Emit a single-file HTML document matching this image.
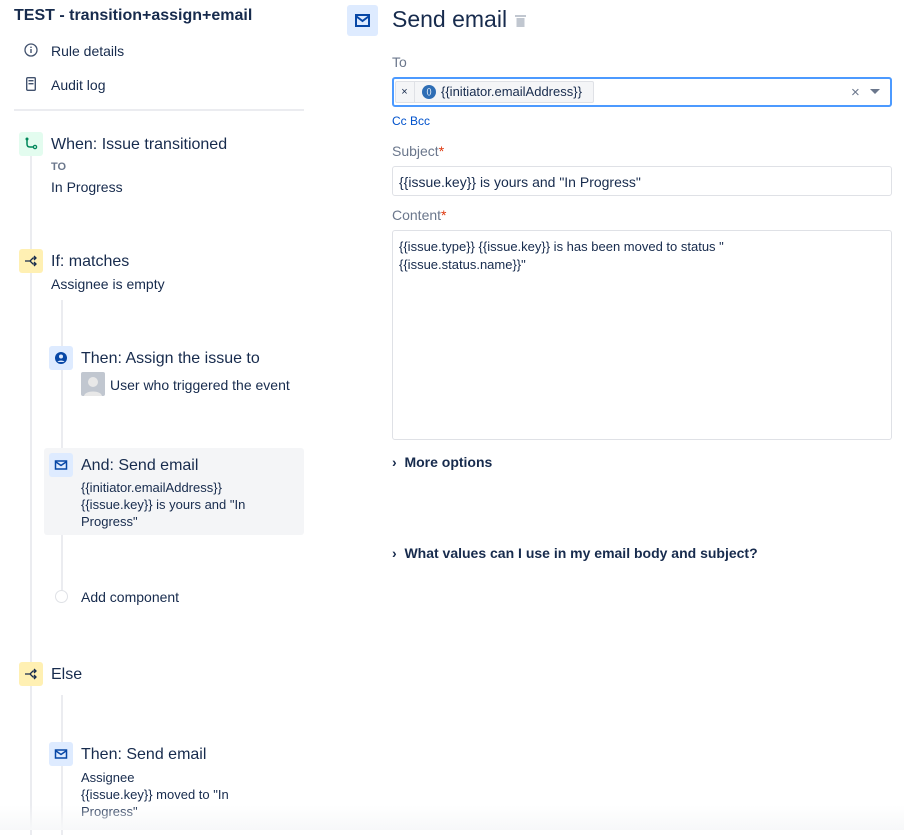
<!DOCTYPE html>
<html><head><style>
body{margin:0;width:904px;height:830px;background:#fff;font-family:"Liberation Sans",sans-serif;color:#172b4d;position:relative;overflow:hidden}
.a{position:absolute;white-space:nowrap}
.ic{position:absolute;width:24px;height:24px;border-radius:3px}
.h{font-size:16px}
.s{font-size:14px;color:#172b4d}
.m{font-size:13px;line-height:17px}
.lbl{font-size:14px;color:#6b778c}
.box{position:absolute;border:1px solid #dfe1e6;border-radius:3px;background:#fff;font-size:14px;box-sizing:border-box}
</style></head><body>
<div class="a" style="left:14px;top:7px;font-size:16px;font-weight:bold">TEST - transition+assign+email</div>
<svg class="a" style="left:24px;top:43px" width="14" height="14"><circle cx="7" cy="7" r="6" fill="none" stroke="#42526e" stroke-width="1.3"/><rect x="6.3" y="6" width="1.4" height="4" fill="#42526e"/><rect x="6.3" y="3.6" width="1.4" height="1.4" fill="#42526e"/></svg>
<div class="a s" style="left:51px;top:43px">Rule details</div>
<svg class="a" style="left:26px;top:77px" width="10" height="14"><rect x="0.7" y="0.7" width="8.6" height="12.6" rx="1" fill="none" stroke="#42526e" stroke-width="1.4"/><rect x="2.5" y="3" width="5" height="1.4" fill="#42526e"/><rect x="2.5" y="6" width="5" height="1.4" fill="#42526e"/></svg>
<div class="a s" style="left:51px;top:77px">Audit log</div>
<div class="a" style="left:14px;top:109px;width:290px;height:2px;background:#ebecf0"></div>

<div class="a" style="left:30px;top:155px;width:2px;height:680px;background:#ebecf0"></div>
<div class="a" style="left:61px;top:300px;width:2px;height:290px;background:#ebecf0"></div>
<div class="a" style="left:61px;top:695px;width:2px;height:140px;background:#ebecf0"></div>

<div class="ic" style="left:19px;top:132px;background:#e3fcef"><svg width="24" height="24"><path d="M8 7v5c0 2 1 3 3 3h4" fill="none" stroke="#00875a" stroke-width="1.5"/><circle cx="8" cy="7" r="1.5" fill="#00875a"/><circle cx="16" cy="15" r="1.6" fill="none" stroke="#00875a" stroke-width="1.3"/></svg></div>
<div class="a h" style="left:51px;top:136px">When: Issue transitioned</div>
<div class="a" style="left:51px;top:161px;font-size:11px;font-weight:bold;color:#6b778c">TO</div>
<div class="a s" style="left:51px;top:179px">In Progress</div>

<div class="ic" style="left:19px;top:249px;background:#fff0b3"><svg width="24" height="24"><path d="M6 12h5M11 12l3-3h3M11 12l3 3h3M15 7l2 2-2 2M15 13l2 2-2 2" fill="none" stroke="#172b4d" stroke-width="1.3"/></svg></div>
<div class="a h" style="left:51px;top:253px">If: matches</div>
<div class="a s" style="left:51px;top:276px">Assignee is empty</div>

<div class="ic" style="left:49px;top:346px;background:#deebff"><svg width="24" height="24"><circle cx="12" cy="12" r="6" fill="#0747a6"/><circle cx="12" cy="10.5" r="2" fill="#deebff"/><path d="M8.5 16c1-2 6-2 7 0" fill="#deebff"/></svg></div>
<div class="a h" style="left:81px;top:350px">Then: Assign the issue to</div>
<div class="a" style="left:81px;top:372px;width:24px;height:24px;background:#c1c7d0;border-radius:2px"><svg width="24" height="24"><circle cx="12" cy="10" r="5" fill="#e8e8e8"/><path d="M3 24c1-6 17-6 18 0z" fill="#e8e8e8"/></svg></div>
<div class="a s" style="left:110px;top:377px">User who triggered the event</div>

<div class="a" style="left:44px;top:448px;width:260px;height:87px;background:#f4f5f7;border-radius:3px"></div>
<div class="ic" style="left:49px;top:453px;background:#deebff"><svg width="24" height="24"><rect x="6.5" y="8" width="11" height="8" fill="none" stroke="#0747a6" stroke-width="1.5"/><path d="M7 9l5 3.5 5-3.5" fill="none" stroke="#0747a6" stroke-width="1.5"/></svg></div>
<div class="a h" style="left:81px;top:457px">And: Send email</div>
<div class="a m" style="left:81px;top:479px">{{initiator.emailAddress}}<br>{{issue.key}} is yours and "In<br>Progress"</div>

<div class="a" style="left:55px;top:590px;width:11px;height:11px;border:1px solid #dfe1e6;border-radius:50%;background:#fff"></div>
<div class="a s" style="left:81px;top:589px">Add component</div>

<div class="ic" style="left:19px;top:662px;background:#fff0b3"><svg width="24" height="24"><path d="M6 12h5M11 12l3-3h3M11 12l3 3h3M15 7l2 2-2 2M15 13l2 2-2 2" fill="none" stroke="#172b4d" stroke-width="1.3"/></svg></div>
<div class="a h" style="left:51px;top:666px">Else</div>

<div class="ic" style="left:49px;top:742px;background:#deebff"><svg width="24" height="24"><rect x="6.5" y="8" width="11" height="8" fill="none" stroke="#0747a6" stroke-width="1.5"/><path d="M7 9l5 3.5 5-3.5" fill="none" stroke="#0747a6" stroke-width="1.5"/></svg></div>
<div class="a h" style="left:81px;top:746px">Then: Send email</div>
<div class="a m" style="left:81px;top:769px">Assignee<br>{{issue.key}} moved to "In<br>Progress"</div>
<div class="a" style="left:0;top:805px;width:904px;height:25px;background:linear-gradient(#fff0,#f7f8f9)"></div>

<div class="a" style="left:347px;top:5px;width:31px;height:31px;background:#deebff;border-radius:3px"><svg width="31" height="31"><rect x="9" y="10" width="13" height="11" fill="none" stroke="#0747a6" stroke-width="2"/><path d="M9.5 11.5l6 4.5 6-4.5" fill="none" stroke="#0747a6" stroke-width="2"/></svg></div>
<div class="a" style="left:392px;top:6px;font-size:23px;color:#172b4d">Send email</div>
<svg class="a" style="left:515px;top:14px" width="11" height="14"><rect x="0" y="1" width="11" height="2" fill="#c1c7d0"/><rect x="1.5" y="4" width="8" height="9" fill="#c1c7d0"/></svg>

<div class="a lbl" style="left:392px;top:54px">To</div>
<div class="box" style="left:392px;top:77px;width:500px;height:30px;border:2px solid #4c9aff"></div>
<div class="a" style="left:395px;top:81px;width:197px;height:20px;border:1px solid #dfe1e6;background:#f4f5f7;border-radius:2px"></div>
<div class="a" style="left:395px;top:81px;width:19px;height:22px;border-right:1px solid #dfe1e6;font-size:11px;text-align:center;line-height:22px">×</div>
<div class="a" style="left:422px;top:85px;width:14px;height:14px;border-radius:50%;background:#2f6eb5;color:#fff;font-size:8px;text-align:center;line-height:14px">()</div>
<div class="a" style="left:441px;top:84px;font-size:13px">{{initiator.emailAddress}}</div>
<div class="a" style="left:851px;top:84px;font-size:15px;color:#6b778c">×</div>
<svg class="a" style="left:870px;top:89px" width="10" height="6"><path d="M0 0h10L5 5z" fill="#6b778c"/></svg>
<div class="a" style="left:392px;top:114px;font-size:12px;color:#0052cc">Cc Bcc</div>

<div class="a lbl" style="left:392px;top:143px">Subject<span style="color:#de350b">*</span></div>
<div class="box" style="left:392px;top:166px;width:500px;height:30px;padding:7px 6px">{{issue.key}} is yours and "In Progress"</div>
<div class="a lbl" style="left:392px;top:207px">Content<span style="color:#de350b">*</span></div>
<div class="box" style="left:392px;top:230px;width:500px;height:210px;padding:7px 6px;font-size:13px;line-height:18px">{{issue.type}} {{issue.key}} is has been moved to status "<br>{{issue.status.name}}"</div>

<div class="a" style="left:392px;top:454px;font-size:14px;font-weight:bold">›&nbsp; More options</div>
<div class="a" style="left:392px;top:545px;font-size:14px;font-weight:bold">›&nbsp; What values can I use in my email body and subject?</div>
</body></html>
